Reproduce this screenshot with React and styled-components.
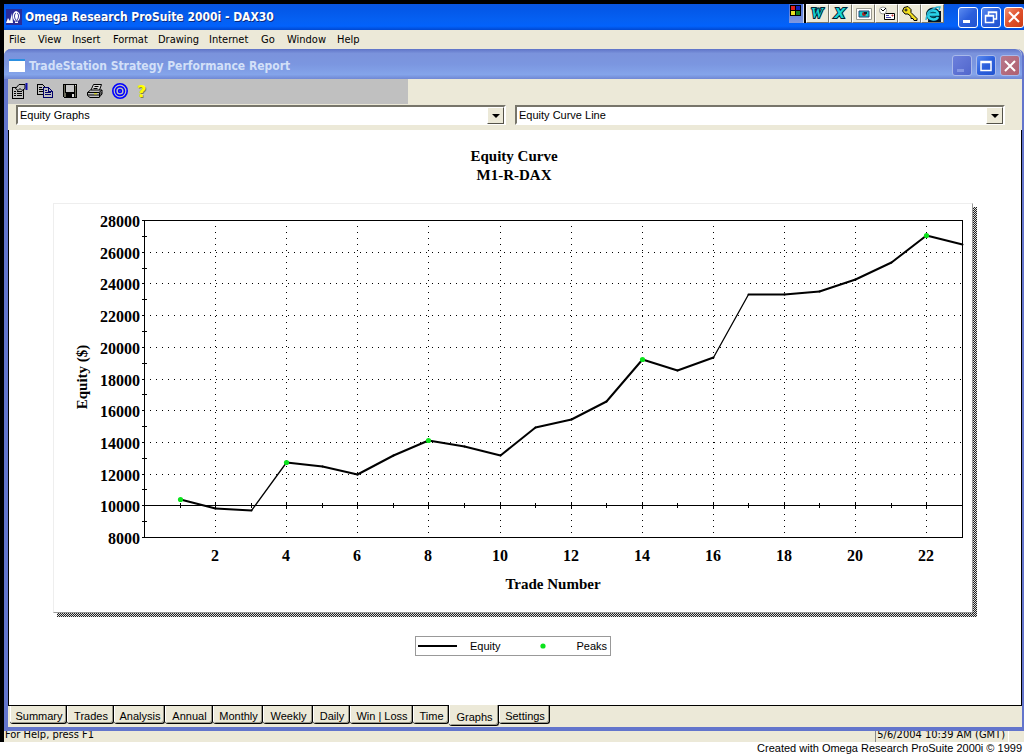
import React from "react";
import styled, { createGlobalStyle, css } from "styled-components";

const ui = '"DejaVu Sans Condensed", "Liberation Sans", sans-serif';
const small = '"Liberation Sans", sans-serif';
const serif = '"Liberation Serif", serif';
const face = "#ece9d8";

const GlobalStyle = createGlobalStyle`
  * { box-sizing: border-box; }
  body { margin: 0; background: #fff; color: #000; font: 11px/14px ${ui}; }
  button, select { font: inherit; color: inherit; margin: 0; padding: 0; }
  svg { display: block; overflow: visible; }
`;

const Page = styled.div`
  display: flex;
  flex-direction: column;
  min-height: 100vh;
  overflow: hidden;
`;

const Shell = styled.main`
  flex: 1;
  display: flex;
  flex-direction: column;
  border-top: 4px solid #000;
  border-left: 4px solid #000;
  background: ${face};
`;

const TitleBar = styled.header`
  display: flex;
  align-items: center;
  gap: 3px;
  height: 26px;
  padding-left: 2px;
  overflow: hidden;
  background: linear-gradient(#0a55e0, #0458e8 20%, #0560f2 60%, #0262fc 85%, #0148d0);
`;

const Title = styled.h1`
  flex: 1;
  margin: 0;
  white-space: nowrap;
  font: bold 12px/18px ${ui};
  color: ${(p) => (p.$inactive ? "#d3e0f8" : "#fff")};
  text-shadow: ${(p) => (p.$inactive ? "none" : "1px 1px 0 #0a2a80")};
`;

const WindowButton = styled.button`
  flex: none;
  width: 20px;
  height: 21px;
  display: grid;
  place-items: center;
  border: 1px solid ${(p) => (p.$inactive ? "#a9b9ea" : "#fff")};
  border-radius: 3px;
  background: ${(p) => p.$fill};
`;

const blueFill = "linear-gradient(135deg, #5c8cf0, #2c5fdc 50%, #2254d0)";
const redFill = "linear-gradient(135deg, #f09070, #e0512c 50%, #cc3c14)";
const mutedBlue = "linear-gradient(135deg, #6c80dc, #5166cc)";
const mutedRed = "linear-gradient(135deg, #b8788c, #b06070)";

const OfficeBar = styled.div`
  align-self: flex-start;
  display: flex;
  height: 19px;
  margin-right: 11px;
`;

const OfficeLead = styled.button`
  display: flex;
  align-items: flex-start;
  width: 15px;
  padding: 1px 0 0 1px;
  border: 0;
  border-right: 1px solid #c8d4f0;
  background: linear-gradient(#4a70d8, #8098e0);
`;

const OfficeButton = styled.button`
  width: 23px;
  display: grid;
  place-items: center;
  border: 1px solid;
  border-color: #fff #77756a #77756a #fff;
  background: ${face};
  ${(p) => p.$first && css`margin-left: 2px; box-shadow: -2px 0 0 #000;`}
`;

const MenuBar = styled.nav`
  display: flex;
  height: 19px;
  padding-left: 1px;
`;

const MenuItem = styled.button`
  min-width: ${(p) => p.$w}px;
  padding: 0 0 0 4px;
  border: 0;
  background: none;
  line-height: 18px;
  text-align: left;
`;

const ReportWindow = styled.section`
  flex: 1;
  display: flex;
  flex-direction: column;
  border: 4px solid #6375cc;
  border-top: 0;
  border-right-width: 2px;
  border-radius: 7px 7px 0 0;
  background: ${face};
`;

const ReportTitle = styled.header`
  display: flex;
  align-items: center;
  gap: 4px;
  height: 30px;
  margin: 0 0 0 -4px;
  padding: 3px 2px 0 5px;
  border-radius: 7px 7px 0 0;
  background: linear-gradient(#5f74c8, #7b93dc 15%, #7b96e0 50%, #84a4ea 85%, #7088d4);
`;

const ToolBar = styled.div`
  display: flex;
  align-items: center;
  gap: 9px;
  width: 40%;
  max-width: 400px;
  height: 25px;
  padding: 0 0 2px 4px;
  background: #c0c0c0;
`;

const ToolButton = styled.button`
  width: 16px;
  height: 16px;
  border: 0;
  background: none;
`;

const Pickers = styled.div`
  display: grid;
  grid-template-columns: 1fr 1fr;
  gap: 9px;
  padding: 1px 17px 5px 8px;
`;

const PickerBox = styled.label`
  position: relative;
  display: block;
`;

const Picker = styled.select`
  appearance: none;
  display: block;
  width: 100%;
  height: 20px;
  padding: 0 20px 0 2px;
  border: 2px solid;
  border-color: #77756a #fff #fff #77756a;
  border-radius: 0;
  background: #fff;
  font: 11px/14px ${small};
`;

const PickerArrow = styled.span`
  position: absolute;
  top: 2px;
  right: 2px;
  width: 17px;
  height: 17px;
  display: grid;
  place-items: center;
  border: 1px solid;
  border-color: #fff #55534a #55534a #fff;
  background: ${face};
  pointer-events: none;
`;

const Sheet = styled.div`
  flex: 1;
  display: flex;
  flex-direction: column;
  align-items: center;
  padding: 17px 48px 0 44px;
  border: 1px solid #000;
  border-top: 0;
  background: #fff;
`;

const ChartTitle = styled.h2`
  margin: 0;
  padding-left: 2px;
  text-align: center;
  font: bold 15px/19px ${serif};
`;

const ChartCard = styled.div`
  align-self: stretch;
  margin: 18px -4px 0 0;
  padding: 0 4px 4px 0;
  background:
    linear-gradient(#fff, #fff) right top / 4px 4px no-repeat,
    linear-gradient(#fff, #fff) left bottom / 4px 4px no-repeat,
    repeating-conic-gradient(#222 0 25%, #ddd 0 50%) 0 0 / 2px 2px;
`;

const ChartFace = styled.div`
  border: 1px solid;
  border-color: #eee #999 #999 #eee;
  background: #fff;
`;

const ChartSvg = styled.svg`
  width: 100%;
  height: auto;
  font: bold 16px ${serif};
`;

const Legend = styled.div`
  display: grid;
  grid-template-columns: 52px 40px 1fr auto;
  align-items: center;
  width: 196px;
  height: 20px;
  margin-top: 19px;
  padding: 0 3px 0 2px;
  border: 1px solid #999;
  font: 11px/14px ${small};
`;

const PeakMark = styled.svg`
  justify-self: center;
`;

const TabRow = styled.nav`
  display: flex;
  align-items: flex-start;
  height: 21px;
  padding-left: 2px;
`;

const Tab = styled.button`
  width: ${(p) => p.$w}px;
  height: 18px;
  padding: 2px 0 0 2px;
  border: solid #000;
  border-width: 0 1px 1px 0;
  border-radius: 0 0 3px 3px;
  box-shadow: inset 1px 0 0 #fff, inset -1px -1px 0 #9a988a;
  background: ${face};
  font: 11px/14px ${small};
  white-space: nowrap;
  ${(p) => p.$active && css`
    height: 21px;
    margin-top: -1px;
    padding-top: 3px;
  `}
`;

const StatusBar = styled.footer`
  display: flex;
  align-items: flex-end;
  justify-content: space-between;
  height: 11px;
  padding: 0 15px 0 1px;
  overflow: hidden;
  line-height: 15px;
`;

const Clock = styled.span`
  padding: 0 3px 0 1px;
  border-left: 1px solid #888;
  border-right: 1px solid #fff;
`;

const Credit = styled.p`
  margin: 0;
  padding-right: 2px;
  text-align: right;
  font: 11px/13px ${small};
`;

const values = [
  10366, 9861, 9735, 12763, 12448, 12006, 13142, 14151, 13710, 13142, 14909, 15476,
  16549, 19199, 18505, 19325, 23300, 23300, 23552, 24309, 25319, 27054, 26455,
];
const peaks = [1, 4, 8, 14, 22];
const px = (n) => Math.round(91 + n * 35.55);
const py = (v) => Math.round(334 - (v - 8000) * 0.01585);

function EquityChart() {
  const rows = Array.from({ length: 21 }, (_, i) => 8000 + i * 1000);
  const trades = Array.from({ length: 22 }, (_, i) => i + 1);
  return (
    <ChartSvg viewBox="0 0 918 408" role="img" aria-label="Equity by trade number">
      <g stroke="#000" fill="none" shapeRendering="crispEdges">
        {rows.filter((v) => v % 2000 === 0 && v > 10000 && v < 28000).map((v) => (
          <line key={v} x1="96" x2="908" y1={py(v) - 0.5} y2={py(v) - 0.5} strokeDasharray="1 5" />
        ))}
        {trades.filter((n) => n % 2 === 0).map((n) => (
          <line key={n} x1={px(n) - 0.5} x2={px(n) - 0.5} y1="22" y2="332" strokeDasharray="1 5" />
        ))}
        <rect x="90.5" y="16.5" width="818" height="317" />
        <line x1="90" x2="909" y1={py(10000) - 0.5} y2={py(10000) - 0.5} />
        {rows.map((v) => (
          <line key={v} x1="88" x2={v % 2000 ? 93 : 91} y1={py(v) - 0.5} y2={py(v) - 0.5} />
        ))}
        {trades.map((n) => (
          <line key={n} x1={px(n) - 0.5} x2={px(n) - 0.5} y1={py(10000) - 3} y2={py(10000) + 2} />
        ))}
      </g>
      <g stroke="#000" strokeLinecap="round">
        {values.slice(1).map((v, i) => {
          const steep = v - values[i] > 2900;
          return (
            <line key={i} x1={px(i + 1) - 0.5} y1={py(values[i]) - 0.5} x2={px(i + 2) - 0.5} y2={py(v) - 0.5}
              strokeWidth={steep ? 1.3 : 2} />
          );
        })}
      </g>
      {peaks.map((n) => <circle key={n} cx={px(n) - 0.5} cy={py(values[n - 1]) - 0.5} r="2.6" fill="#0be31c" />)}
      <g textAnchor="end">
        {rows.filter((v) => v % 2000 === 0).map((v) => (
          <text key={v} x="86" y={py(v) + 6}>{v}</text>
        ))}
      </g>
      <g textAnchor="middle">
        {trades.filter((n) => n % 2 === 0).map((n) => (
          <text key={n} x={px(n) - 1} y="357">{n}</text>
        ))}
        <g fontSize="15">
          <text x="499" y="385">Trade Number</text>
          <text transform="translate(33 173) rotate(-90)">Equity ($)</text>
        </g>
      </g>
    </ChartSvg>
  );
}

const Icon = ({ size = 16, children }) => (
  <svg width={size} height={size} viewBox="0 0 16 16" fill="none" stroke="#000" aria-hidden="true">{children}</svg>
);

const OmegaIcon = () => (
  <Icon>
    <path d="M0 0h16v16H0z" fill="#2a2c98" stroke="none" />
    <path d="M0 14 2 9l2 3 2-8 1 10zM6 14h3v-2C6 10 6 3 10 2c5 1 5 8 2 10v2h3" fill="#fff" stroke="none" />
    <path d="M10 4c-2 1-2 5 0 7v2M11 4c2 1 2 5 0 7v2" stroke="#2a2c98" />
  </Icon>
);

const DocIcon = () => (
  <Icon>
    <path d="M0 1h16v13H0z" fill="#fff" stroke="none" />
    <path d="M0 2h16" stroke="#2c8fe0" strokeWidth="2" />
  </Icon>
);

const LetterMark = ({ letter, family = "Liberation Serif, serif", slanted }) => (
  <svg width="19" height="17" viewBox="0 0 19 17" aria-hidden="true">
    <text x="9" y="13" textAnchor="middle" fontFamily={family} fontSize="14" fontWeight="bold"
      fontStyle={slanted ? "italic" : "normal"} fill="#19d4d4" stroke="#023" strokeWidth="2" paintOrder="stroke">{letter}</text>
  </svg>
);

const tools = [
  ["Properties", (
    <g>
      <path d="M.5 4.500h11v11H.5z" shapeRendering="crispEdges" />
      <path d="M2 8.500h2M5 8.500h5M2 10.500h2M5 10.500h5M2 12.500h2M5 12.500h5" shapeRendering="crispEdges" />
      <path d="M3.500 5.500 7 1.500h6v4l-3 2-2-2-2 2z" fill="#c0c0c0" />
      <path d="M14.500 0v7" stroke="#1010b0" strokeWidth="2" />
    </g>
  )],
  ["Copy", (
    <g shapeRendering="crispEdges">
      <path d="M.5 1.500h5l3 3v7h-8z" fill="#c0c0c0" />
      <path d="M2 4.500h3M2 6.500h4M2 8.500h4" />
      <path d="M6.500 4.500h5l4 4v6h-9z" fill="#c0c0c0" stroke="#00006a" />
      <path d="M11.500 4v4h4M8 7.500h2M8 9.500h6M8 11.500h6" stroke="#00006a" />
    </g>
  )],
  ["Save", (
    <g shapeRendering="crispEdges">
      <path d="M1.500 1.500h13v13h-12l-1-1z" fill="#6a6a5a" />
      <path d="M4 2h8v7H4z" fill="#c8c8c8" stroke="none" />
      <path d="M3.500 2v7h9V2" />
      <path d="M4 10h9v4H4z" fill="#000" stroke="none" />
      <path d="M10 11h2v3h-2zM13 2h1v1h-1z" fill="#ddd" stroke="none" />
    </g>
  )],
  ["Print", (
    <g>
      <path d="M4 7 6.500 1.500h8L12.500 7" fill="#d8d8d8" />
      <path d="M7.500 3.500h4M6.500 5.500h4" />
      <path d="M.5 9.500 3.500 7h11.500v4l-3 3.500H3L.5 12.500z" fill="#c0c0c0" />
      <path d="M.5 9.500H12l3-2.500M1 12h11.500M12.500 9.500v5M14 9v3" />
      <path d="M7 10.800h3" stroke="#dd0" />
    </g>
  )],
  ["Strategy target", (
    <g stroke="#00f" strokeWidth="1.600">
      <circle cx="8" cy="8" r="7.200" /><circle cx="8" cy="8" r="4.400" /><circle cx="8" cy="8" r="1.400" />
    </g>
  )],
  ["Help", (
    <g stroke="none" fontFamily="DejaVu Sans, sans-serif" fontWeight="bold" fontSize="16">
      <text x="1" y="15" fill="#85853c">?</text><text x="0" y="14" fill="#ff0">?</text>
    </g>
  )],
];

const officeIcons = [
  ["Word", <LetterMark letter="W" slanted />],
  ["Excel", <LetterMark letter="X" family="DejaVu Sans, sans-serif" slanted />],
  ["PowerPoint", <Icon><path d="M.5 2.500h15v11H.5z" fill="#fff" stroke="#9a9a90" /><path d="M3 5h10v6H3z" fill="#19c9c9" stroke="#247" /><circle cx="8" cy="8" r="2" fill="#a22" stroke="none" /><path d="M8 8V6h3v2z" fill="#123" stroke="none" /></Icon>],
  ["Schedule", <Icon><path d="M5.500 7.500h10v6h-10z" fill="#fff" /><path d="M7 9.500h3M7 11.500h5" stroke="#44a" /><circle cx="4" cy="4.500" r="3.500" fill="#fff" stroke="#999" /><path d="M2 3l2 2 3-3" /><path d="M13 9h1v1h-1z" fill="#c33" stroke="#c33" /></Icon>],
  ["Access", <Icon><path d="M2 1.500 6 .5l3 3v3l6 6v2h-3l-1-2H9v-2L6 8H3L.5 5z" fill="#f4e020" /><circle cx="4" cy="4" r="1" fill="#fff" /></Icon>],
  ["Internet Explorer", <Icon><path d="M4 5h12v11H3z" fill="#012" stroke="none" /><circle cx="8" cy="8.500" r="5" fill="#0b5a70" stroke="#023" strokeWidth="4" /><path d="M13 11c-2 4-10 3-10-2.500S13 3 13 8.500H4" stroke="#2ad4ea" strokeWidth="2.500" /><path d="M1 14C1 8 9 0 15 1l-1 3" stroke="#2ab4d4" strokeWidth="1.500" /></Icon>],
];

const Minimize = ({ color = "#fff" }) => <Icon><path d="M3 12.500h7" stroke={color} strokeWidth="3" /></Icon>;
const Restore = () => <Icon><path d="M5.500 6V3h8v7H11M5 3.500h9M2.500 6.500h8v7h-8zM2 7h9" stroke="#fff" strokeWidth="1.500" /></Icon>;
const Maximize = () => <Icon><path d="M3 3.500h10v9H3zM3 4.500h10" stroke="#fff" strokeWidth="1.500" /></Icon>;
const Close = () => <Icon><path d="m3 3 10 10M13 3 3 13" stroke="#fff" strokeWidth="2" /></Icon>;

const menus = [["File", 29], ["View", 34], ["Insert", 41], ["Format", 45], ["Drawing", 51], ["Internet", 52], ["Go", 26], ["Window", 50], ["Help", 30]];
const tabs = [["Summary", 57], ["Trades", 47], ["Analysis", 51], ["Annual", 48], ["Monthly", 50], ["Weekly", 50], ["Daily", 37], ["Win | Loss", 63], ["Time", 36], ["Graphs", 50], ["Settings", 51]];

function Combo({ label, value }) {
  return (
    <PickerBox>
      <Picker aria-label={label} defaultValue={value}><option>{value}</option></Picker>
      <PickerArrow>
        <svg width="8" height="4" viewBox="0 0 8 4"><path d="M0 0h8L4 4z" /></svg>
      </PickerArrow>
    </PickerBox>
  );
}

export default function App() {
  return (
    <Page>
      <GlobalStyle />
      <Shell>
        <TitleBar>
          <OmegaIcon />
          <Title>Omega Research ProSuite 2000i - DAX30</Title>
          <OfficeBar>
            <OfficeLead aria-label="Office shortcuts">
              <svg width="12" height="12" viewBox="0 0 12 12">
                <path d="M0 0h11v11H0z" /><path d="M1 1h4v4H1z" fill="#e02020" /><path d="M6 1h4v4H6z" fill="#1020c0" />
                <path d="M1 6h4v4H1z" fill="#e8e020" /><path d="M6 6h4v4H6z" fill="#108020" />
              </svg>
            </OfficeLead>
            {officeIcons.map(([name, icon], i) => (
              <OfficeButton key={name} aria-label={name} $first={i === 0}>{icon}</OfficeButton>
            ))}
          </OfficeBar>
          <WindowButton aria-label="Minimize" $fill={blueFill}><Minimize /></WindowButton>
          <WindowButton aria-label="Restore" $fill={blueFill}><Restore /></WindowButton>
          <WindowButton aria-label="Close" $fill={redFill}><Close /></WindowButton>
        </TitleBar>
        <MenuBar>
          {menus.map(([name, w]) => <MenuItem key={name} $w={w}>{name}</MenuItem>)}
        </MenuBar>
        <ReportWindow>
          <ReportTitle>
            <DocIcon />
            <Title as="h2" $inactive>TradeStation Strategy Performance Report</Title>
            <WindowButton aria-label="Minimize report" $inactive $fill={mutedBlue}><Minimize color="#8496e4" /></WindowButton>
            <WindowButton aria-label="Maximize report" $inactive $fill={blueFill}><Maximize /></WindowButton>
            <WindowButton aria-label="Close report" $inactive $fill={mutedRed}><Close /></WindowButton>
          </ReportTitle>
          <ToolBar>
            {tools.map(([name, icon]) => (
              <ToolButton key={name} aria-label={name}><Icon>{icon}</Icon></ToolButton>
            ))}
          </ToolBar>
          <Pickers>
            <Combo label="Report section" value="Equity Graphs" />
            <Combo label="Graph" value="Equity Curve Line" />
          </Pickers>
          <Sheet>
            <ChartTitle>Equity Curve<br />M1-R-DAX</ChartTitle>
            <ChartCard><ChartFace><EquityChart /></ChartFace></ChartCard>
            <Legend>
              <svg width="39" height="4"><path d="M0 1h39v2H0z" /></svg>
              <span>Equity</span>
              <PeakMark width="6" height="6"><circle cx="3" cy="3" r="2.6" fill="#0be31c" /></PeakMark>
              <span>Peaks</span>
            </Legend>
          </Sheet>
          <TabRow>
            {tabs.map(([name, w]) => <Tab key={name} $w={w} $active={name === "Graphs"}>{name}</Tab>)}
          </TabRow>
        </ReportWindow>
        <StatusBar>
          <span>For Help, press F1</span>
          <Clock>5/6/2004 10:39 AM (GMT)</Clock>
        </StatusBar>
      </Shell>
      <Credit>Created with Omega Research ProSuite 2000i © 1999</Credit>
    </Page>
  );
}
